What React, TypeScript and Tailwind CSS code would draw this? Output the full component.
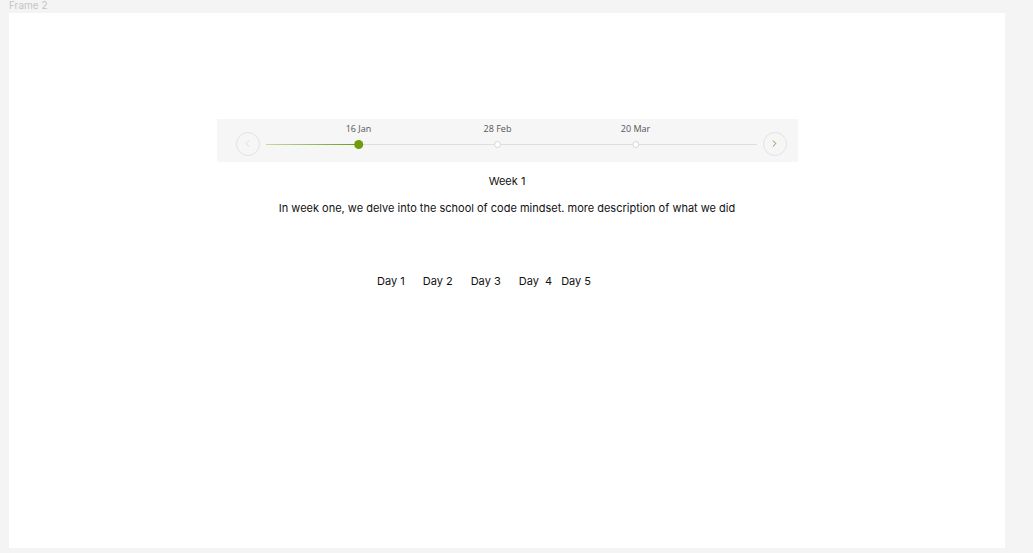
import { ChevronLeft, ChevronRight } from "lucide-react";

const stops = [
  { label: "16 Jan", left: 93, active: true },
  { label: "28 Feb", left: 232, active: false },
  { label: "20 Mar", left: 370, active: false },
];

const days = ["Day 1", "Day 2", "Day 3", "Day  4", "Day 5"];

function Timeline() {
  return (
    <div className="flex h-[43px] w-[581px] items-center bg-[#f6f6f6] pl-[19px] pr-[11px]">
      <button className="flex h-[24px] w-[24px] items-center justify-center rounded-full border border-[#e3e3e3] mt-[6px]">
        <ChevronLeft size={11} strokeWidth={1.5} className="text-[#cfcfcf]" />
      </button>
      <div className="relative mx-[6px] h-full flex-1">
        <div className="absolute left-0 right-0 top-[25px] h-px bg-[#dedede]" />
        <div className="absolute left-0 top-[25px] h-px w-[93px] bg-gradient-to-r from-[#c8d9a0] to-[#6b9a0c]" />
        {stops.map((s) => (
          <div
            key={s.label}
            className="absolute top-0 flex -translate-x-1/2 flex-col items-center"
            style={{ left: s.left }}
          >
            <span className="mt-[4px] whitespace-pre text-[9px] leading-[12px] text-[#555] [font-family:'Open_Sans',sans-serif]">
              {s.label}
            </span>
            {s.active ? (
              <span className="mt-[5px] h-[9px] w-[9px] rounded-full bg-[#6f9c0b]" />
            ) : (
              <span className="mt-[6px] h-[7px] w-[7px] rounded-full border border-[#d6d6d6] bg-white" />
            )}
          </div>
        ))}
      </div>
      <button className="flex h-[24px] w-[24px] items-center justify-center rounded-full border border-[#e3e3e3] mt-[6px]">
        <ChevronRight size={11} strokeWidth={2} className="text-[#6f8f3a]" />
      </button>
    </div>
  );
}

export default function App() {
  return (
    <div className="relative h-[553px] w-[1033px] overflow-hidden bg-[#f4f4f4] [font-family:Inter,sans-serif]">
      <div className="h-[13px] pl-[9px] text-[10px] leading-[11px] text-[#c4c4c4]">Frame 2</div>
      <div className="ml-[9px] flex h-[535px] w-[996px] flex-col items-center bg-white pt-[106px]">
        <Timeline />
        <div className="mt-[12px] text-[11px] leading-[14px] text-[#111]">Week 1</div>
        <div className="mt-[13px] text-[11px] leading-[14px] text-[#111]">
          In week one, we delve into the school of code mindset. more description of what we did
        </div>
        <div className="mt-[59px] flex self-start pl-[368px] text-[11px] leading-[14px] text-[#111]">
          {days.map((d, i) => (
            <span key={d} className={"whitespace-pre " + (i === 3 ? "mr-[9px]" : "mr-[18px]")}>
              {d}
            </span>
          ))}
        </div>
      </div>
    </div>
  );
}
